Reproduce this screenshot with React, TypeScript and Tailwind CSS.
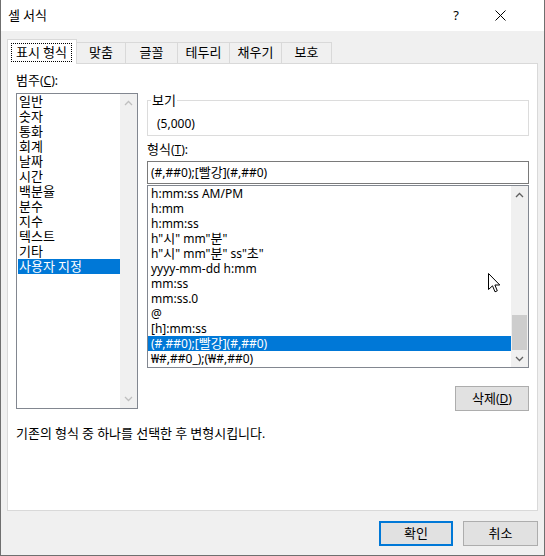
import React from "react";

const categories = ["일반", "숫자", "통화", "회계", "날짜", "시간", "백분율", "분수", "지수", "텍스트", "기타", "사용자 지정"];
const formats = [
  "h:mm:ss AM/PM",
  "h:mm",
  "h:mm:ss",
  'h"시" mm"분"',
  'h"시" mm"분" ss"초"',
  "yyyy-mm-dd h:mm",
  "mm:ss",
  "mm:ss.0",
  "@",
  "[h]:mm:ss",
  "(#,##0);[빨강](#,##0)",
  "₩#,##0_);(₩#,##0)",
];

// hangul runs get a slightly bigger size so they match the Malgun Gothic widths
const K = ({ s }: { s: string }) => (
  <span>
    {s.split(/([가-힣]+)/).map((p, i) =>
      /[가-힣]/.test(p) ? (
        <span key={i} className="text-[13px]">
          {p}
        </span>
      ) : (
        p
      )
    )}
  </span>
);

const Chevron = ({ down, color }: { down?: boolean; color: string }) => (
  <svg width="9" height="6" viewBox="0 0 9 6">
    <polyline points={down ? "1,1 4.5,4.5 8,1" : "1,5 4.5,1.5 8,5"} fill="none" stroke={color} strokeWidth="1.3" />
  </svg>
);

const App = () => {
  return (
    <div className="relative w-[545px] h-[556px] flex flex-col border-x border-b border-[#6f6f6f] bg-[#f0f0f0] text-[12px] text-black font-['Noto_Sans','Noto_Sans_CJK_KR',sans-serif] select-none">
      {/* title bar */}
      <div className="h-[31px] bg-white flex items-center pl-[7px]">
        <span className="flex-1">
          <K s="셀 서식" />
        </span>
        <span className="w-[12px] text-center text-[13px] mr-[33px]">?</span>
        <svg width="11" height="11" viewBox="0 0 11 11" className="mr-[38px]">
          <line x1="0.5" y1="0.5" x2="10.5" y2="10.5" stroke="#000" strokeWidth="1" />
          <line x1="10.5" y1="0.5" x2="0.5" y2="10.5" stroke="#000" strokeWidth="1" />
        </svg>
      </div>

      <div className="flex-1 flex flex-col px-[6px] pt-[8px]">
        {/* tabs */}
        <div className="h-[24px] flex items-end">
          <div className="relative z-10 w-[70px] h-[25px] -mb-[1px] bg-white border-x border-t border-[#d9d9d9] pt-[3px] pl-[3px]">
            <div className="w-[61px] h-[19px] border border-dotted border-black flex items-center justify-center">
              <K s="표시 형식" />
            </div>
          </div>
          <div className="w-[50px] h-[21px] -ml-[1px] border-x border-t border-[#d9d9d9] flex items-center justify-center">
            <K s="맞춤" />
          </div>
          <div className="w-[53px] h-[21px] -ml-[1px] border-x border-t border-[#d9d9d9] flex items-center justify-center">
            <K s="글꼴" />
          </div>
          <div className="w-[53px] h-[21px] -ml-[1px] border-x border-t border-[#d9d9d9] flex items-center justify-center">
            <K s="테두리" />
          </div>
          <div className="w-[53px] h-[21px] -ml-[1px] border-x border-t border-[#d9d9d9] flex items-center justify-center">
            <K s="채우기" />
          </div>
          <div className="w-[51px] h-[21px] -ml-[1px] border-x border-t border-[#d9d9d9] flex items-center justify-center">
            <K s="보호" />
          </div>
        </div>

        {/* panel */}
        <div className="h-[448px] bg-white border border-[#d9d9d9] pt-[9px] pl-[8px] flex flex-col">
          <div className="h-[15px] leading-[15px]">
            <K s="범주" />(<span className="underline">C</span>):
          </div>
          <div className="flex items-start mt-[5px]">
            {/* category list */}
            <div className="w-[122px] h-[316px] border border-[#828790] bg-white flex">
              <div className="flex-1 flex flex-col">
                {categories.map((c, i) => (
                  <div
                    key={c}
                    className={i === 11 ? "h-[15px] leading-[15px] ml-[1px] pl-[1px] bg-[#0078d7] text-white" : "h-[15px] leading-[15px] ml-[1px] pl-[1px]"}
                  >
                    <K s={c} />
                  </div>
                ))}
              </div>
              <div className="w-[17px] bg-[#f0f0f0] flex flex-col justify-between items-center py-[6px]">
                <Chevron color="#bfbfbf" />
                <Chevron down color="#bfbfbf" />
              </div>
            </div>

            {/* right column */}
            <div className="w-[382px] ml-[9px] flex flex-col">
              <fieldset className="border border-[#dcdcdc] pb-[4px]">
                <legend className="ml-[3px] px-[1px] leading-[15px]">
                  <K s="보기" />
                </legend>
                <div className="mt-[8px] h-[15px] leading-[15px] pl-[9px]">(5,000)</div>
              </fieldset>
              <div className="mt-[6px] h-[15px] leading-[15px]">
                <K s="형식" />(<span className="underline">T</span>):
              </div>
              <div className="mt-[4px] h-[23px] border border-[#7a7a7a] flex items-center pl-[3px]">
                <K s="(#,##0);[빨강](#,##0)" />
              </div>
              <div className="mt-[1px] h-[183px] border border-[#828790] flex">
                <div className="flex-1 flex flex-col">
                  {formats.map((f, i) => (
                    <div
                      key={f}
                      className={i === 10 ? "h-[15px] leading-[15px] pl-[3px] bg-[#0078d7] text-white" : "h-[15px] leading-[15px] pl-[3px]"}
                    >
                      <K s={f} />
                    </div>
                  ))}
                </div>
                <div className="w-[17px] bg-[#f0f0f0] flex flex-col">
                  <div className="h-[17px] flex items-center justify-center">
                    <Chevron color="#606060" />
                  </div>
                  <div className="flex-1 flex flex-col justify-end px-[1px]">
                    <div className="h-[35px] bg-[#cdcdcd]" />
                  </div>
                  <div className="h-[17px] flex items-center justify-center">
                    <Chevron down color="#606060" />
                  </div>
                </div>
              </div>
              <div className="mt-[18px] self-end w-[74px] h-[25px] bg-[#e1e1e1] border border-[#adadad] flex items-center justify-center">
                <span>
                  <K s="삭제" />(<span className="underline">D</span>)
                </span>
              </div>
            </div>
          </div>
          <div className="mt-[15px] h-[15px] leading-[15px]">
            <K s="기존의 형식 중 하나를 선택한 후 변형시킵니다." />
          </div>
        </div>

        {/* dialog buttons */}
        <div className="mt-[10px] flex justify-end gap-[10px]">
          <div className="w-[74px] h-[25px] bg-[#e1e1e1] border-2 border-[#0078d7] flex items-center justify-center">
            <K s="확인" />
          </div>
          <div className="w-[75px] h-[25px] bg-[#e1e1e1] border border-[#adadad] flex items-center justify-center">
            <K s="취소" />
          </div>
        </div>
      </div>

      {/* mouse pointer */}
      <svg width="13" height="21" viewBox="0 0 13 21" className="absolute left-[487px] top-[273px]">
        <path d="M0.5 0.5 L0.5 16.5 L4.5 12.8 L7 18.8 L9.3 17.8 L6.9 12 L11.8 12 Z" fill="#fff" stroke="#000" strokeWidth="1" strokeLinejoin="miter" />
      </svg>
    </div>
  );
};

export default App;
